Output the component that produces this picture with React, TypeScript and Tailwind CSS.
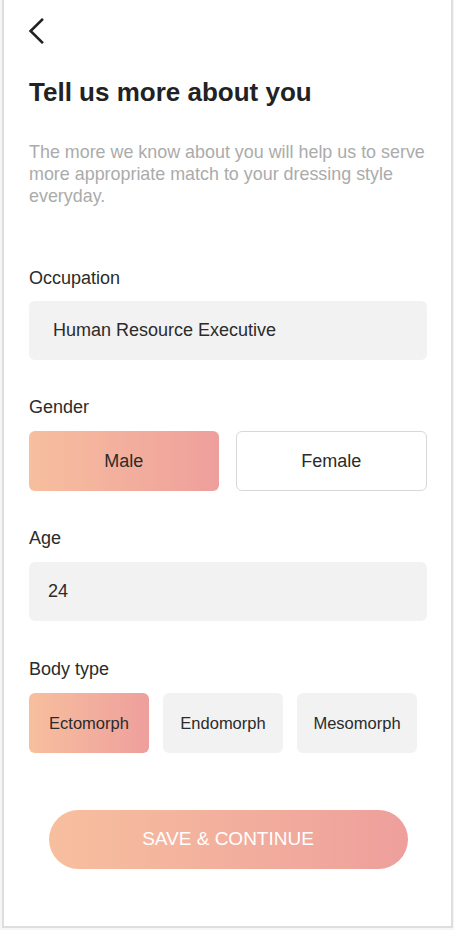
const GRADIENT = 'bg-gradient-to-r from-[#f7bf9e] to-[#ee9f9c]'

const BODY_TYPES = ['Ectomorph', 'Endomorph', 'Mesomorph']

function Label({ children }: { children: React.ReactNode }) {
  return <p className="text-[18px] leading-[24px] text-[#2b2b2b]">{children}</p>
}

export default function App() {
  const gender = 'Male'
  const bodyType = 'Ectomorph'

  return (
    <div className="min-h-[930px] bg-[#f6f6f6] font-['Liberation_Sans',Arial,sans-serif]">
      <div className="ml-[2px] flex h-[928px] w-[451px] flex-col border-x-2 border-b-2 border-[#dedede] bg-white pl-[25px] pr-[24px]">
        {/* Back */}
        <button className="mt-[18px] -ml-[1px] h-[26px] w-[16px] text-[#222]">
          <svg width="16" height="26" viewBox="0 0 16 26" fill="none">
            <path d="M14 1.8 L2.6 13 L14 24.2" stroke="currentColor" strokeWidth="2.6" strokeLinecap="square" />
          </svg>
        </button>

        <h1 className="mt-[32px] text-[26px] font-bold leading-[32px] text-[#222]">Tell us more about you</h1>

        <p className="mt-[33px] -mr-[12px] text-[17.9px] leading-[22px] text-[#ababab]">
          The more we know about you will help us to serve more appropriate match to your dressing style everyday.
        </p>

        {/* Occupation */}
        <div className="mt-[59px]">
          <Label>Occupation</Label>
          <div className="mt-[11px] flex h-[59px] items-center rounded-[6px] bg-[#f2f2f2] px-[24px] text-[18px] text-[#2b2b2b]">
            Human Resource Executive
          </div>
        </div>

        {/* Gender */}
        <div className="mt-[35px]">
          <Label>Gender</Label>
          <div className="mt-[12px] flex gap-[17px]">
            {['Male', 'Female'].map((g) => (
              <button
                key={g}
                className={
                  g === gender
                    ? `flex h-[60px] flex-1 items-center justify-center rounded-[6px] ${GRADIENT} text-[18px] text-[#2b2b2b]`
                    : 'flex h-[60px] flex-1 items-center justify-center rounded-[6px] border border-[#d8d8d8] bg-white text-[18px] text-[#2b2b2b]'
                }
              >
                {g}
              </button>
            ))}
          </div>
        </div>

        {/* Age */}
        <div className="mt-[35px]">
          <Label>Age</Label>
          <div className="mt-[12px] flex h-[59px] items-center rounded-[6px] bg-[#f2f2f2] px-[19px] text-[18px] text-[#2b2b2b]">
            24
          </div>
        </div>

        {/* Body type */}
        <div className="mt-[36px]">
          <Label>Body type</Label>
          <div className="mt-[12px] flex gap-[14px]">
            {BODY_TYPES.map((b) => (
              <button
                key={b}
                className={
                  b === bodyType
                    ? `flex h-[60px] w-[120px] items-center justify-center rounded-[6px] ${GRADIENT} text-[16.5px] text-[#2b2b2b]`
                    : 'flex h-[60px] w-[120px] items-center justify-center rounded-[6px] bg-[#f2f2f2] text-[16.5px] text-[#2b2b2b]'
                }
              >
                {b}
              </button>
            ))}
          </div>
        </div>

        <button
          className={`mx-auto mt-[57px] flex h-[59px] w-[359px] items-center justify-center rounded-full ${GRADIENT} text-[19px] text-white`}
        >
          SAVE &amp; CONTINUE
        </button>
      </div>
    </div>
  )
}
